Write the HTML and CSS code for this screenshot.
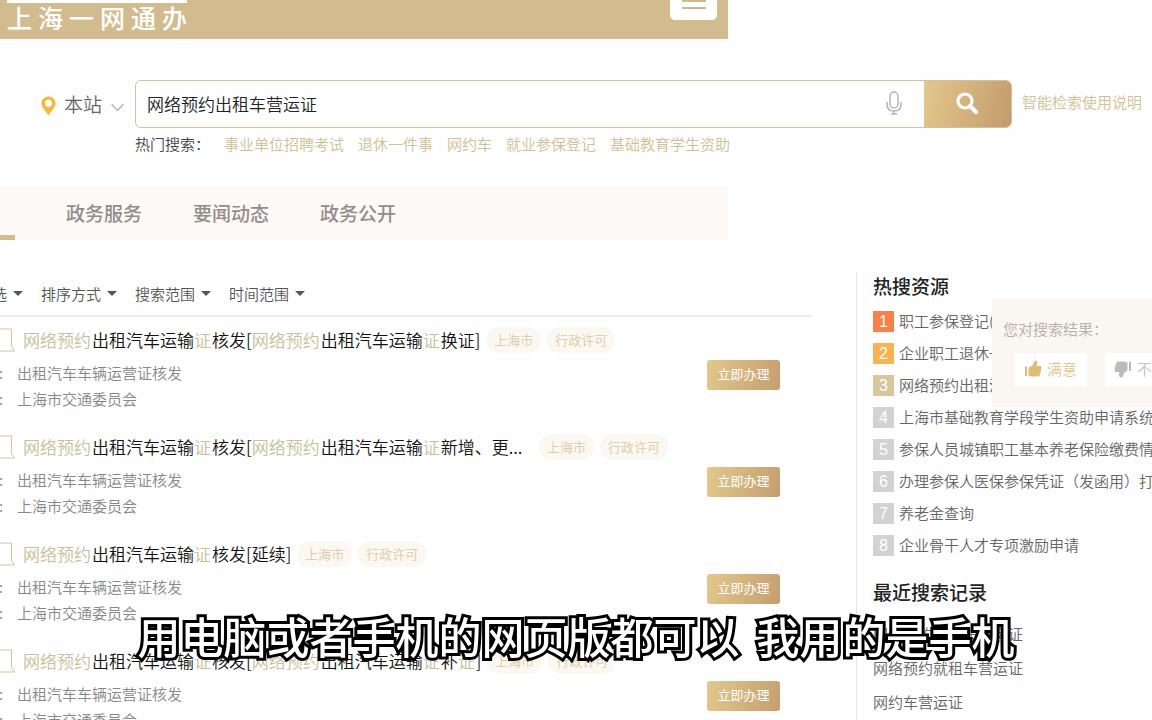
FILE: index.html
```html
<!DOCTYPE html>
<html lang="zh-CN">
<head>
<meta charset="utf-8">
<meta name="viewport" content="width=device-width, initial-scale=1">
<title>上海一网通办</title>
<link rel="stylesheet" href="styles.css">
</head>
<body>
<header class="topbar">
  <div class="logo">上海一网通办</div>
  <button class="menu" type="button" aria-label="菜单">
    <svg width="24" height="16" viewBox="0 0 24 16" fill="none" stroke="#cfb98c" stroke-width="2"><path d="M0 1H24M0 8H24M0 15H24"/></svg>
  </button>
</header>

<form class="search">
  <label class="site">
    <svg width="15" height="20" viewBox="0 0 15 20"><path fill="#f2b943" fill-rule="evenodd" d="M7.500 0.500C3.400 0.500 0.500 3.500 0.500 7.300C0.500 11.700 5 15.500 7.500 19.500C10 15.500 14.500 11.700 14.500 7.300C14.500 3.500 11.600 0.500 7.500 0.500ZM7.500 3.700A3.500 3.500 0 1 1 7.500 10.700A3.500 3.500 0 1 1 7.500 3.700Z"/></svg>
    <select aria-label="站点"><option>本站</option></select>
    <svg width="13" height="13" viewBox="0 0 13 13" fill="none" stroke="#b5b5b5" stroke-width="1.500"><path d="M0.500 1L6.500 7.500L12.500 1"/></svg>
  </label>
  <div class="box">
    <input type="text" aria-label="搜索" value="网络预约出租车营运证">
    <button class="mic" type="button" aria-label="语音输入">
      <svg width="16" height="24" viewBox="0 0 16 24" fill="none" stroke="#b4b4b4" stroke-width="1.500"><rect x="4" y="1" width="8" height="16" rx="4"/><path d="M1 11V13.500C1 18 4 20 8 20S15 18 15 13.500V11M8 20V23M5 23H11"/></svg>
    </button>
    <button class="go" type="submit" aria-label="搜索">
      <svg width="22" height="24" viewBox="0 0 22 24" fill="none" stroke="#fff"><circle cx="9" cy="9" r="7" stroke-width="3.200"/><path d="M14 14L20 20" stroke-width="4.200" stroke-linecap="round"/></svg>
    </button>
  </div>
  <a class="help" href="#">智能检索使用说明</a>
</form>
<div class="hot">
  <span>热门搜索：</span>
  <a href="#">事业单位招聘考试</a>
  <a href="#">退休一件事</a>
  <a href="#">网约车</a>
  <a href="#">就业参保登记</a>
  <a href="#">基础教育学生资助</a>
</div>

<nav class="tabs">
  <span class="current"></span>
  <a href="#">政务服务</a>
  <a href="#">要闻动态</a>
  <a href="#">政务公开</a>
</nav>

<div class="content">
  <main class="results">
    <div class="filters">
      <label><select aria-label="筛选"><option>选</option></select></label>
      <label><select aria-label="排序方式"><option>排序方式</option></select></label>
      <label><select aria-label="搜索范围"><option>搜索范围</option></select></label>
      <label><select aria-label="时间范围"><option>时间范围</option></select></label>
    </div>

    <article class="item">
      <div class="heading">
        <svg class="flag" width="16" height="24" viewBox="0 0 16 24"><path d="M0 1H11.500V18.500L14.500 23H0"/></svg>
        <h3 class="title"><em>网络预约</em>出租汽车运输<em>证</em>核发[<em>网络预约</em>出租汽车运输<em>证</em>换证]</h3>
        <span class="tag">上海市</span><span class="tag">行政许可</span>
      </div>
      <div class="detail">
        <dl><dt>:</dt><dd>出租汽车车辆运营证核发</dd><dt>:</dt><dd>上海市交通委员会</dd></dl>
        <button class="apply" type="button">立即办理</button>
      </div>
    </article>

    <article class="item">
      <div class="heading">
        <svg class="flag" width="16" height="24" viewBox="0 0 16 24"><path d="M0 1H11.500V18.500L14.500 23H0"/></svg>
        <h3 class="title title-full"><em>网络预约</em>出租汽车运输<em>证</em>核发[<em>网络预约</em>出租汽车运输<em>证</em>新增、更...</h3>
        <span class="tag">上海市</span><span class="tag">行政许可</span>
      </div>
      <div class="detail">
        <dl><dt>:</dt><dd>出租汽车车辆运营证核发</dd><dt>:</dt><dd>上海市交通委员会</dd></dl>
        <button class="apply" type="button">立即办理</button>
      </div>
    </article>

    <article class="item">
      <div class="heading">
        <svg class="flag" width="16" height="24" viewBox="0 0 16 24"><path d="M0 1H11.500V18.500L14.500 23H0"/></svg>
        <h3 class="title"><em>网络预约</em>出租汽车运输<em>证</em>核发[延续]</h3>
        <span class="tag">上海市</span><span class="tag">行政许可</span>
      </div>
      <div class="detail">
        <dl><dt>:</dt><dd>出租汽车车辆运营证核发</dd><dt>:</dt><dd>上海市交通委员会</dd></dl>
        <button class="apply" type="button">立即办理</button>
      </div>
    </article>

    <article class="item">
      <div class="heading">
        <svg class="flag" width="16" height="24" viewBox="0 0 16 24"><path d="M0 1H11.500V18.500L14.500 23H0"/></svg>
        <h3 class="title"><em>网络预约</em>出租汽车运输<em>证</em>核发[<em>网络预约</em>出租汽车运输<em>证</em>补<em>证</em>]</h3>
        <span class="tag">上海市</span><span class="tag">行政许可</span>
      </div>
      <div class="detail">
        <dl><dt>:</dt><dd>出租汽车车辆运营证核发</dd><dt>:</dt><dd>上海市交通委员会</dd></dl>
        <button class="apply" type="button">立即办理</button>
      </div>
    </article>
  </main>

  <aside class="side">
    <h2>热搜资源</h2>
    <ol class="ranking">
      <li><b>1</b><a href="#">职工参保登记(</a></li>
      <li><b>2</b><a href="#">企业职工退休一</a></li>
      <li><b>3</b><a href="#">网络预约出租汽</a></li>
      <li><b>4</b><a href="#">上海市基础教育学段学生资助申请系统</a></li>
      <li><b>5</b><a href="#">参保人员城镇职工基本养老保险缴费情</a></li>
      <li><b>6</b><a href="#">办理参保人医保参保凭证（发函用）打</a></li>
      <li><b>7</b><a href="#">养老金查询</a></li>
      <li><b>8</b><a href="#">企业骨干人才专项激励申请</a></li>
    </ol>
    <h2>最近搜索记录</h2>
    <ul class="history">
      <li><a href="#">网络预约出租车营运证</a></li>
      <li><a href="#">网络预约就租车营运证</a></li>
      <li><a href="#">网约车营运证</a></li>
    </ul>
  </aside>
</div>

<section class="feedback">
  <p>您对搜索结果：</p>
  <div class="votes">
    <button type="button" class="yes">
      <svg width="18" height="18" viewBox="0 0 18 18" fill="#dbbd78"><path d="M1 6.500H3V16H1ZM4.500 7.500L8.500 5.500L10.500 1C11.500 -0.200 13.500 1 13.300 3L12.500 6H16C17.600 6 17.800 8 16.800 8.500C17.800 9.300 17.500 10.700 16.500 11C17.300 12 16.800 13.200 15.800 13.500C16.300 14.800 15.300 16.500 14 16.500H8L4.500 15.500Z"/></svg>满意
    </button>
    <button type="button" class="no">
      <svg width="18" height="18" viewBox="0 0 18 18" fill="#bdbbb9"><path d="M17 1.500H15V11H17ZM13.500 10.500L10.500 12.500L8.500 17C7.500 18.200 4.700 17 4.800 15L5.500 12H2C0.400 12 0.200 10 1.200 9.500C0.200 8.700 0.500 7.300 1.500 7C0.700 6 1.200 4.800 2.200 4.500C1.700 3.200 2.700 1.500 4 1.500H10L13.500 2.500Z"/></svg>不
    </button>
  </div>
</section>

<div class="caption"><span>用电脑或者手机的网页版都可以</span><span>我用的是手机</span></div>
</body>
</html>
```
FILE: styles.css
```css
* {
  box-sizing: border-box;
}

html,
body {
  margin: 0;
  height: 100%;
  overflow: hidden;
}

body {
  background: #fefefe;
  color: #555;
  font: 350 15px/24px "Noto Sans CJK SC", "Noto Sans", sans-serif;
}

h2,
h3,
p,
ol,
ul,
dl,
dd {
  margin: 0;
  padding: 0;
  list-style: none;
}

a {
  color: inherit;
  text-decoration: none;
}

button,
input,
select {
  margin: 0;
  padding: 0;
  border: 0;
  background: none;
  color: inherit;
  font: inherit;
}

select {
  appearance: none;
}

svg {
  flex: none;
  display: block;
}

/* Top bar */
.topbar {
  display: flex;
  justify-content: space-between;
  align-items: flex-start;
  width: 63.2%;
  height: 39px;
  padding: 0 11px 0 7px;
  overflow: hidden;
  background: #d2bc8f;
}

.logo {
  width: 180px;
  border-top: 3px solid #fff;
  color: #fff;
  font-size: 25px;
  font-weight: 500;
  line-height: 28px;
  text-align-last: justify;
  white-space: nowrap;
}

.menu {
  display: flex;
  align-items: center;
  justify-content: center;
  width: 47px;
  height: 38px;
  margin-top: -18px;
  border-radius: 5px;
  background: #fff;
}

/* Search */
.search {
  display: flex;
  align-items: center;
  gap: 10px;
  margin-top: 41px;
  padding-right: 10px;
}

.site {
  display: flex;
  align-items: flex-end;
  gap: 8px;
  width: 125px;
  padding-left: 41px;
  color: #666;
  font-size: 19px;
}

.box {
  display: flex;
  flex: 1;
  height: 48px;
  border: 1px solid #d3c19b;
  border-radius: 6px;
  overflow: hidden;
  background: #fff;
}

.box input {
  flex: 1;
  min-width: 0;
  padding-left: 11px;
  outline: 0;
  color: #222;
  font-size: 17px;
}

.mic {
  padding: 0 22px 3px;
}

.go {
  display: flex;
  align-items: center;
  justify-content: center;
  width: 87px;
  background: linear-gradient(105deg, #e3c88b, #c39b6d);
}

.help {
  padding-bottom: 5px;
  color: #d0c095;
}

.hot {
  display: flex;
  gap: 14px;
  margin-top: 4px;
  padding-left: 135px;
  color: #444;
}

.hot a {
  color: #d0c095;
}

/* Tabs */
.tabs {
  display: flex;
  align-items: center;
  gap: 51px;
  width: 63.2%;
  height: 53px;
  margin-top: 31px;
  border-radius: 4px;
  background: #fdf9f6;
  color: #918d8a;
  font-size: 19px;
  font-weight: 500;
}

.tabs a {
  padding-bottom: 2px;
}

.current {
  align-self: flex-end;
  width: 15px;
  height: 5px;
  background: #d2bc8f;
}

/* Columns */
.content {
  display: grid;
  grid-template-columns: minmax(0, 1fr) 296px;
  column-gap: 44px;
  margin-top: 32px;
}

.filters {
  display: flex;
  align-items: center;
  gap: 18px;
  height: 45px;
  margin-left: -8px;
  margin-bottom: 9px;
  border-bottom: 2px solid #ededed;
}

.filters label {
  display: flex;
  align-items: center;
  gap: 5px;
}

.filters label::after {
  content: "";
  border: 5px solid transparent;
  border-top-color: #555;
  border-bottom-width: 0;
}

.item {
  padding-bottom: 21px;
}

.heading {
  display: flex;
  align-items: center;
  gap: 6px;
  height: 28px;
}

.flag {
  fill: none;
  stroke: #d3c49c;
}

.title {
  color: #111;
  font-size: 17px;
  font-weight: 350;
  white-space: nowrap;
}

.title-full {
  width: 511px;
}

.title em {
  margin-right: 1px;
  color: #cabf98;
  font-style: normal;
}

.title em:first-child {
  margin-left: 1px;
}

.tag {
  padding: 0 8px;
  border-radius: 13px;
  background: #fbf7f1;
  color: #d9cba6;
  font-size: 13px;
  line-height: 26px;
  white-space: nowrap;
}

.detail {
  display: flex;
  justify-content: space-between;
  align-items: flex-start;
  margin-top: 6px;
  padding-right: 32px;
  color: #888;
}

.detail dl {
  display: grid;
  grid-template-columns: 18px auto;
  margin-left: -1px;
  line-height: 26px;
}

.apply {
  width: 73px;
  height: 30px;
  padding-bottom: 2px;
  border-radius: 3px;
  background: linear-gradient(105deg, #e2c88c, #c59e70);
  color: #fff;
  font-size: 13px;
  font-weight: 400;
}

/* Side column */
.side {
  min-width: 0;
  padding-left: 16px;
  border-left: 1px solid #e4e4e4;
  color: #666;
  white-space: nowrap;
  overflow: hidden;
}

.side h2 {
  color: #222;
  font-size: 19px;
  font-weight: 500;
  line-height: 28px;
}

.ranking {
  margin: 5px 0 17px;
}

.ranking li {
  display: flex;
  align-items: center;
  gap: 5px;
  height: 32px;
}

.ranking b {
  flex: none;
  width: 21px;
  background: #d2d2d2;
  color: #fff;
  font: 400 16px/21px "Liberation Sans", sans-serif;
  text-align: center;
}

.ranking li:nth-child(1) b {
  background: #fa7f48;
}

.ranking li:nth-child(2) b {
  background: #fbb252;
}

.ranking li:nth-child(3) b {
  background: #d8c79c;
}

.history {
  margin-top: 11px;
  line-height: 34px;
}

/* Feedback panel pinned to the window edge */
.feedback {
  position: fixed;
  top: 298px;
  right: 0;
  width: 160px;
  padding: 19px 0 21px 11px;
  overflow: hidden;
  background: #faf6f1;
  color: #b3aea8;
}

.votes {
  display: flex;
  gap: 18px;
  margin: 12px 0 0 12px;
}

.votes button {
  display: flex;
  flex: none;
  align-items: center;
  gap: 5px;
  height: 33px;
  padding: 0 10px 2px 9px;
  background: #fff;
}

.votes .yes {
  color: #dcc58d;
}

.votes .no {
  color: #c5c2bf;
}

/* Subtitle */
.caption {
  position: fixed;
  right: 0;
  bottom: 53px;
  left: 0;
  display: flex;
  justify-content: center;
  gap: 17px;
  color: #fff;
  font-size: 43px;
  font-weight: 500;
  line-height: 64px;
  white-space: nowrap;
  -webkit-text-stroke: 6px #000;
  paint-order: stroke fill;
  stroke-linejoin: round;
  pointer-events: none;
}
```
